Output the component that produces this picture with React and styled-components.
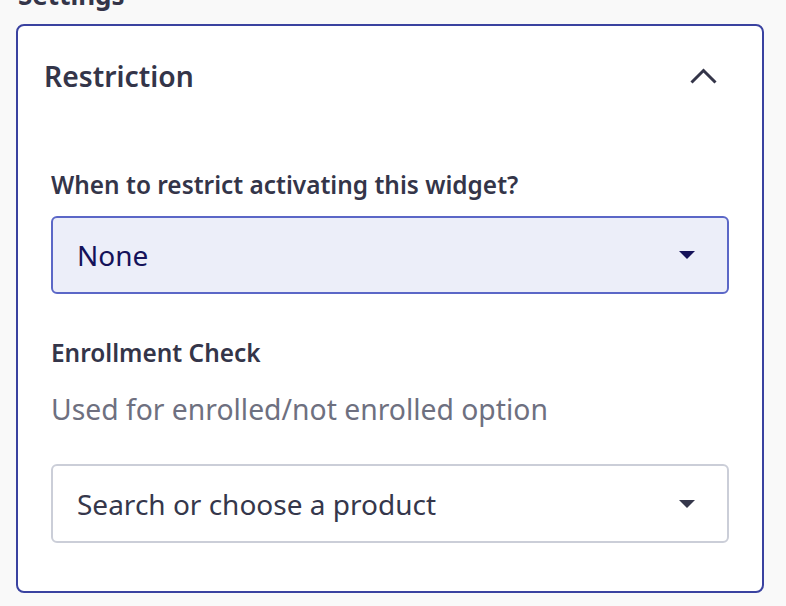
import React from "react";
import styled, { createGlobalStyle } from "styled-components";

const Global = createGlobalStyle`
  html, body { margin: 0; padding: 0; background: #f9f9f9; }
  body { font-family: "Noto Sans", sans-serif; }
`;

const Page = styled.div`
  padding: 0 22px 0 16px;
  margin-top: -22px;
`;

const PageTitle = styled.div`
  font-size: 26px;
  font-weight: 700;
  color: #343549;
  line-height: 34px;
  height: 46px;
  padding-left: 2px;
`;

const Card = styled.section`
  border: 2px solid #3a42a0;
  border-radius: 8px;
  background: #fff;
  padding: 0 33px 48px 33px;
`;

const CardHeader = styled.div`
  height: 100px;
  display: flex;
  align-items: center;
  justify-content: space-between;
  margin: 0 12px 0 -7px;
`;

const CardTitle = styled.h2`
  margin: 0;
  font-size: 28.3px;
  font-weight: 600;
  color: #343549;
`;

const Label = styled.div`
  font-size: 24.4px;
  font-weight: 600;
  color: #343549;
  line-height: 30px;
  margin-top: ${(p) => p.$mt}px;
`;

const Help = styled.div`
  font-size: 28.3px;
  color: #6e7080;
  line-height: 30px;
  margin-top: 26px;
`;

const Select = styled.div`
  margin-top: ${(p) => p.$mt}px;
  height: ${(p) => p.$h}px;
  box-sizing: border-box;
  border: 2px solid ${(p) => (p.$active ? "#5b67c7" : "#cbced8")};
  background: ${(p) => (p.$active ? "#eceef9" : "#fff")};
  border-radius: 6px;
  display: flex;
  align-items: center;
  justify-content: space-between;
  padding: 0 32px 0 24px;
  color: ${(p) => (p.$active ? "#15125a" : "#35374b")};
  font-size: 28px;
`;

const Caret = ({ color }) => (
  <svg width="16" height="8" viewBox="0 0 16 8">
    <path d="M0 0 H16 L8 8 Z" fill={color} />
  </svg>
);

const Chevron = () => (
  <svg width="27" height="16" viewBox="0 0 27 16" fill="none">
    <path d="M1.5 14.5 L13.5 2.5 L25.5 14.5" stroke="#343549" strokeWidth="3" />
  </svg>
);

export default function App() {
  return (
    <>
      <Global />
      <Page>
        <PageTitle>Settings</PageTitle>
        <Card>
          <CardHeader>
            <CardTitle>Restriction</CardTitle>
            <Chevron />
          </CardHeader>
          <Label $mt={44}>When to restrict activating this widget?</Label>
          <Select $active $mt={16} $h={78}>
            <span>None</span>
            <Caret color="#15125a" />
          </Select>
          <Label $mt={44}>Enrollment Check</Label>
          <Help>Used for enrolled/not enrolled option</Help>
          <Select $mt={40} $h={79}>
            <span>Search or choose a product</span>
            <Caret color="#35374b" />
          </Select>
        </Card>
      </Page>
    </>
  );
}
